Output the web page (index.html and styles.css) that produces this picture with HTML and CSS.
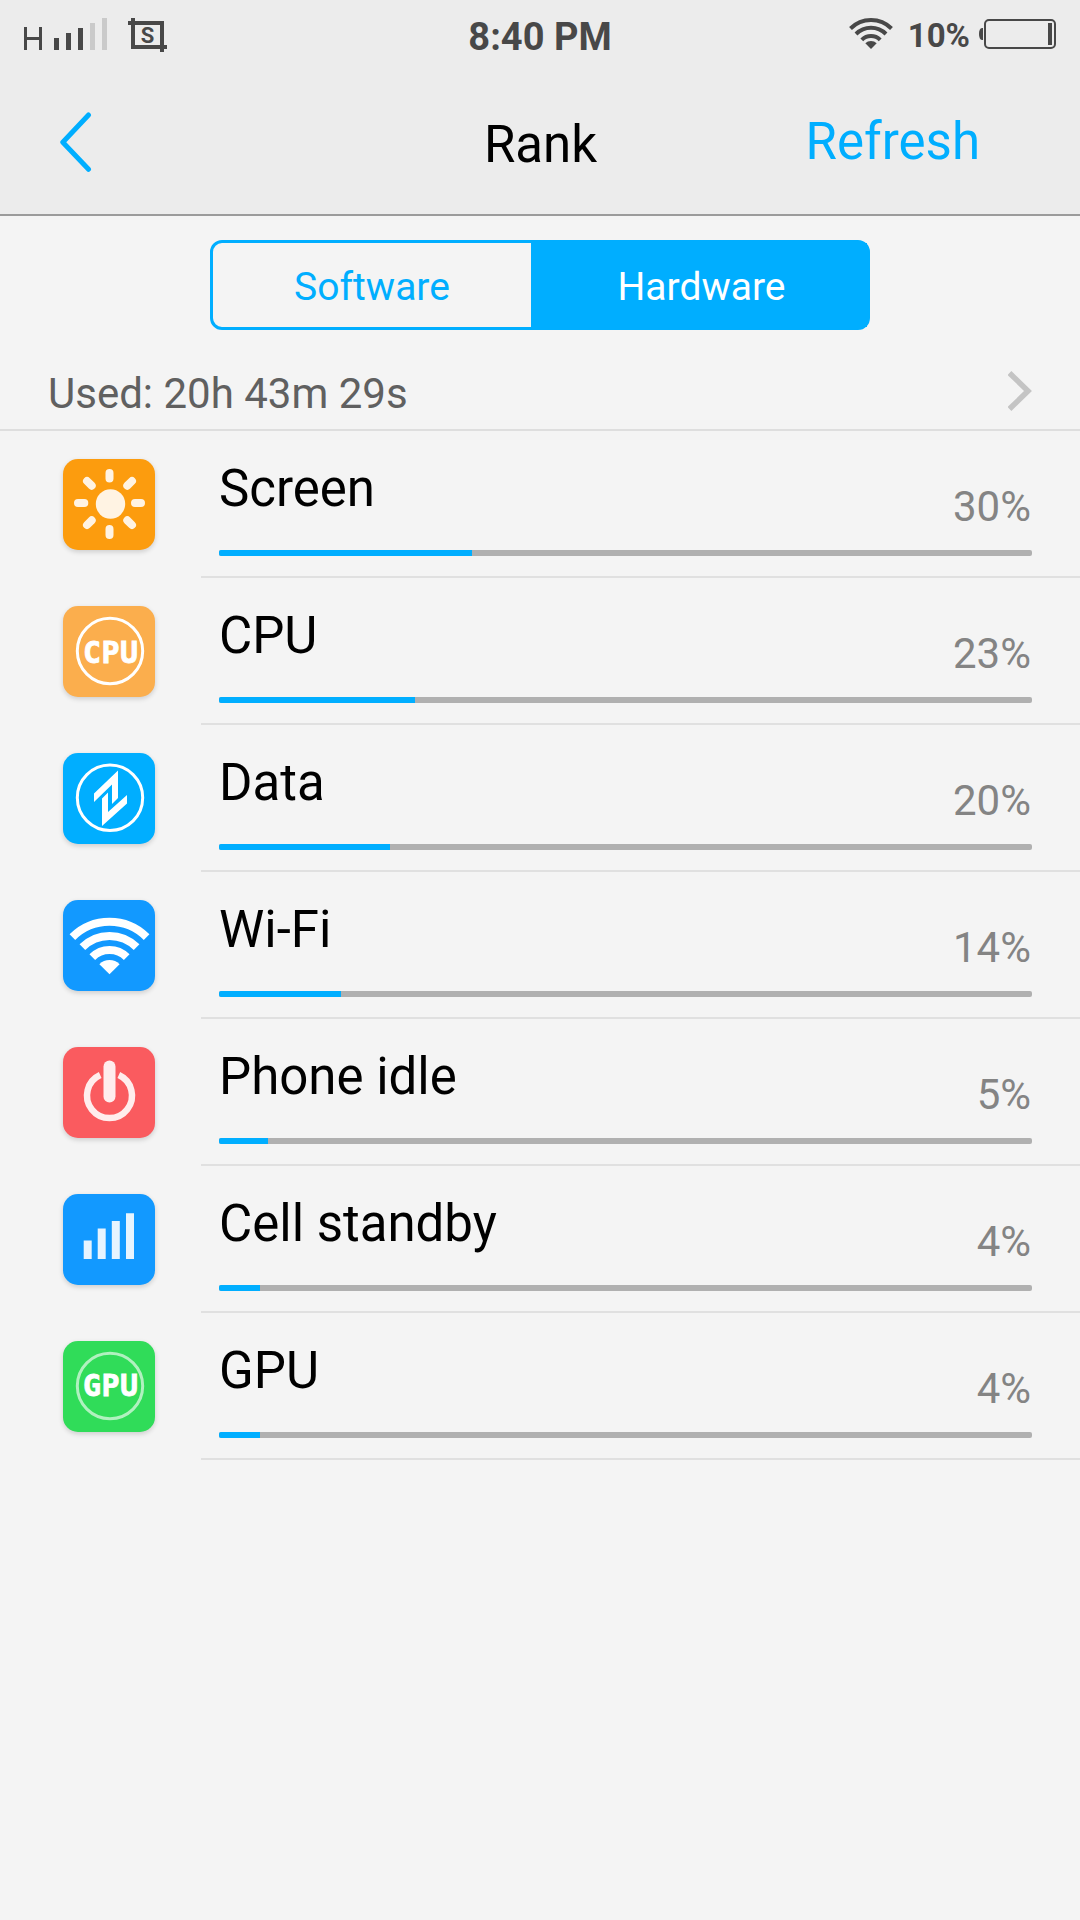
FILE: index.html
```html
<!DOCTYPE html>
<html lang="en">
<head>
  <meta charset="UTF-8" />
  <meta name="viewport" content="width=device-width, initial-scale=1.0"/>
  <title>Rank</title>
  <link rel="stylesheet" href="styles.css">
</head>
<body>
  <header class="header">
    <!-- Status bar -->
    <div class="status-bar">
      <div class="status-left">
        <svg class="signal" width="84" height="34" viewBox="0 0 84 34">
          <path d="M1.5 10v23M16.5 10v23M1.5 21.5h15" fill="none" stroke="#484848" stroke-width="3"/>
          <path d="M30 21h5v12h-5zM42 16h5v17h-5zM54 11h5v22h-5z" fill="#484848"/>
          <path d="M66 6h5v27h-5zM78 1h5v32h-5z" fill="#cacaca"/>
        </svg>
        <svg class="capture" width="39" height="34" viewBox="0 0 39 34">
          <path d="M0 5h36M5 0v31M34 3v31M3 29h36" fill="none" stroke="#484848" stroke-width="4"/>
          <text x="19.5" y="24.5" class="capture-text">S</text>
        </svg>
      </div>
      <div class="clock">8:40 PM</div>
      <div class="status-right">
        <svg class="wifi" width="46" height="33" viewBox="0 0 46 33">
          <g fill="none" stroke="#484848" stroke-width="4">
            <path d="M2.5 11.5a29 29 0 0 1 41 0"/>
            <path d="M8 17a21.2 21.2 0 0 1 30 0"/>
            <path d="M13.8 22.8a13 13 0 0 1 18.4 0"/>
          </g>
          <path d="M17.3 26.3a8 8 0 0 1 11.4 0L23 32z" fill="#484848"/>
        </svg>
        <span class="battery-text">10%</span>
        <svg class="battery" width="77" height="30" viewBox="0 0 77 30">
          <path d="M4 9H3Q0 9.500 0 15t3 6h1z" fill="#484848"/>
          <rect x="6" y="1" width="70" height="28" rx="4" fill="none" stroke="#484848" stroke-width="2"/>
          <rect x="69" y="4" width="4" height="22" fill="#484848"/>
        </svg>
      </div>
    </div>

    <!-- Title bar -->
    <div class="title-bar">
      <a class="back">
        <svg width="32" height="60" viewBox="0 0 32 60">
          <path d="M28.500 3L2.800 30.300l25.700 27" fill="none" stroke="#00aeff" stroke-width="5" stroke-linecap="round" stroke-linejoin="round"/>
        </svg>
      </a>
      <h1>Rank</h1>
      <a class="refresh">Refresh</a>
    </div>
  </header>

  <div class="tabs">
    <a class="tab">Software</a>
    <a class="tab active">Hardware</a>
  </div>

  <div class="used">
    <span>Used: 20h 43m 29s</span>
    <svg width="24" height="40" viewBox="0 0 24 40">
      <path d="M1.500 2l18.500 18L1.500 38" fill="none" stroke="#c4c4c4" stroke-width="5.500"/>
    </svg>
  </div>

  <div class="list">
    <div class="item">
      <svg class="icon screen" viewBox="0 0 92 91">
        <circle cx="47.5" cy="45" r="14.7" fill="#fff3e3"/>
        <path d="M46.5 14v5.500M46.5 70v6M15 44h6.300M72 44h6M24 22l4.700 4.700M69 22l-4.700 4.700M24 66l4.700-4.700M69 66l-4.700-4.700" fill="none" stroke="#fff3e3" stroke-width="8" stroke-linecap="round"/>
      </svg>
      <div class="details">
        <div class="info"><span class="name">Screen</span><span class="percent">30%</span></div>
        <div class="bar"><div class="fill" style="width: 31.1%"></div></div>
      </div>
    </div>

    <div class="item">
      <svg class="icon cpu" viewBox="0 0 92 91">
        <circle cx="47" cy="45" r="32.7" fill="none" stroke="#fff" stroke-width="3"/>
        <text x="20" y="56.5" textLength="55" class="chip-text">CPU</text>
      </svg>
      <div class="details">
        <div class="info"><span class="name">CPU</span><span class="percent">23%</span></div>
        <div class="bar"><div class="fill" style="width: 24.1%"></div></div>
      </div>
    </div>

    <div class="item">
      <svg class="icon data" viewBox="0 0 92 91">
        <circle cx="47" cy="44.7" r="32.7" fill="none" stroke="#fff" stroke-width="3"/>
        <path d="M55 17.500V45l-6 6V31.500L31 49v-8.500zM39 73V45.500l6-6V59l19-17v8.500z" fill="#fff"/>
      </svg>
      <div class="details">
        <div class="info"><span class="name">Data</span><span class="percent">20%</span></div>
        <div class="bar"><div class="fill" style="width: 21.03%"></div></div>
      </div>
    </div>

    <div class="item">
      <svg class="icon wifi-item" viewBox="0 0 92 91">
        <g fill="none" stroke="#fff" stroke-width="8">
          <path d="M9.400 37.200a52.500 52.500 0 0 1 74.200 0"/>
          <path d="M19.400 47.200a38.300 38.300 0 0 1 54.200 0"/>
          <path d="M29.300 57.100a24.300 24.300 0 0 1 34.400 0"/>
        </g>
        <path d="M36.400 64.200a14.300 14.300 0 0 1 20.200 0L46.500 74.300z" fill="#fff"/>
      </svg>
      <div class="details">
        <div class="info"><span class="name">Wi-Fi</span><span class="percent">14%</span></div>
        <div class="bar"><div class="fill" style="width: 15.05%"></div></div>
      </div>
    </div>

    <div class="item">
      <svg class="icon idle" viewBox="0 0 92 91">
        <path d="M37.200 28a22.500 22.500 0 1 0 18.600 0" fill="none" stroke="#ffeded" stroke-width="6.500"/>
        <path d="M46.500 19.500v30" fill="none" stroke="#ffeded" stroke-width="12" stroke-linecap="round"/>
      </svg>
      <div class="details">
        <div class="info"><span class="name">Phone idle</span><span class="percent">5%</span></div>
        <div class="bar"><div class="fill" style="width: 6.03%"></div></div>
      </div>
    </div>

    <div class="item">
      <svg class="icon cell" viewBox="0 0 92 91">
        <path d="M20.700 46.500h8V65h-8zM34.700 34.500h8V65h-8zM48.800 27h8v38h-8zM63 19.300h8V65h-8z" fill="#e7f4ff"/>
      </svg>
      <div class="details">
        <div class="info"><span class="name">Cell standby</span><span class="percent">4%</span></div>
        <div class="bar"><div class="fill" style="width: 5.04%"></div></div>
      </div>
    </div>

    <div class="item">
      <svg class="icon gpu" viewBox="0 0 92 91">
        <circle cx="47" cy="45" r="32.7" fill="none" stroke="#b0f1bf" stroke-width="3"/>
        <text x="20" y="55" textLength="55" class="chip-text">GPU</text>
      </svg>
      <div class="details">
        <div class="info"><span class="name">GPU</span><span class="percent">4%</span></div>
        <div class="bar"><div class="fill" style="width: 5.04%"></div></div>
      </div>
    </div>
  </div>
</body>
</html>
```
FILE: styles.css
```css
body {
  margin: 0;
  min-height: 100vh;
  font-family: Roboto, sans-serif;
  background-color: #f4f4f4;
  color: #000;
}

svg {
  display: block;
}

.header {
  height: 214px;
  background-color: #ececec;
  border-bottom: 2px solid #9b9b9b;
}

.status-bar {
  display: grid;
  grid-template-columns: 1fr auto 1fr;
  height: 70px;
  padding: 0 24px;
  color: #484848;
  font-weight: bold;
}

.status-left,
.status-right {
  display: flex;
  align-items: flex-start;
}

.signal {
  margin-top: 17px;
}

.capture {
  margin: 18px 0 0 20px;
}

.capture-text {
  font-size: 22px;
  font-weight: bold;
  fill: #484848;
  text-anchor: middle;
}

.clock {
  font-size: 38px;
  line-height: 44px;
  padding-top: 15px;
}

.status-right {
  justify-content: flex-end;
}

.wifi {
  margin-top: 17px;
}

.battery-text {
  font-size: 33px;
  line-height: 40px;
  margin: 16px 9px 0 14px;
}

.battery {
  margin-top: 19px;
}

.title-bar {
  display: grid;
  grid-template-columns: 1fr auto 1fr;
  padding: 0 100px 0 60px;
}

.back {
  padding-top: 42px;
}

h1 {
  margin: 0 0 0 41px;
  padding-top: 45px;
  font-size: 51px;
  font-weight: normal;
  line-height: 60px;
}

.refresh {
  padding-top: 42px;
  color: #00aeff;
  font-size: 51px;
  line-height: 60px;
  text-align: right;
}

.tabs {
  display: flex;
  box-sizing: border-box;
  width: 660px;
  height: 90px;
  margin: 24px auto 0;
  border: 3px solid #00aeff;
  border-radius: 12px;
}

.tab {
  width: 318px;
  color: #00aeff;
  font-size: 39px;
  line-height: 88px;
  text-align: center;
}

.tab.active {
  flex: 1;
  height: 84px;
  padding-left: 5px;
  background-color: #00aeff;
  color: #fff;
}

.used {
  display: flex;
  justify-content: space-between;
  height: 99px;
  padding: 0 48px;
  border-bottom: 2px solid #dedede;
  color: #606060;
  font-size: 42px;
  line-height: 128px;
}

.used svg {
  margin-top: 41px;
}

.item {
  display: flex;
  height: 147px;
}

.icon {
  width: 92px;
  height: 91px;
  margin: 28px 46px 0 63px;
  border-radius: 15px;
  box-shadow: 0 2px 5px rgba(0, 0, 0, 0.16);
}

.screen {
  background-color: #fc9c0e;
}

.cpu {
  background-color: #fbae4d;
}

.data {
  background-color: #00aeff;
}

.wifi-item,
.cell {
  background-color: #1299ff;
}

.idle {
  background-color: #fa5b5f;
}

.gpu {
  background-color: #30dc59;
}

.chip-text {
  font-family: "DejaVu Sans Mono", monospace;
  font-size: 30px;
  font-weight: bold;
  fill: #fff;
  stroke: #fff;
  stroke-width: 0.8px;
}

.details {
  flex: 1;
  padding: 0 48px 0 18px;
  border-bottom: 2px solid #e0e0e0;
}

.info {
  display: flex;
  justify-content: space-between;
  height: 119px;
}

.name {
  padding-top: 28px;
  font-size: 51px;
  line-height: 60px;
}

.percent {
  padding: 51px 1px 0 0;
  color: #848484;
  font-size: 42px;
  line-height: 50px;
}

.bar {
  height: 6px;
  border-radius: 2px;
  background-color: #b0b0b0;
  overflow: hidden;
}

.fill {
  height: 100%;
  background-color: #00aeff;
}
```
